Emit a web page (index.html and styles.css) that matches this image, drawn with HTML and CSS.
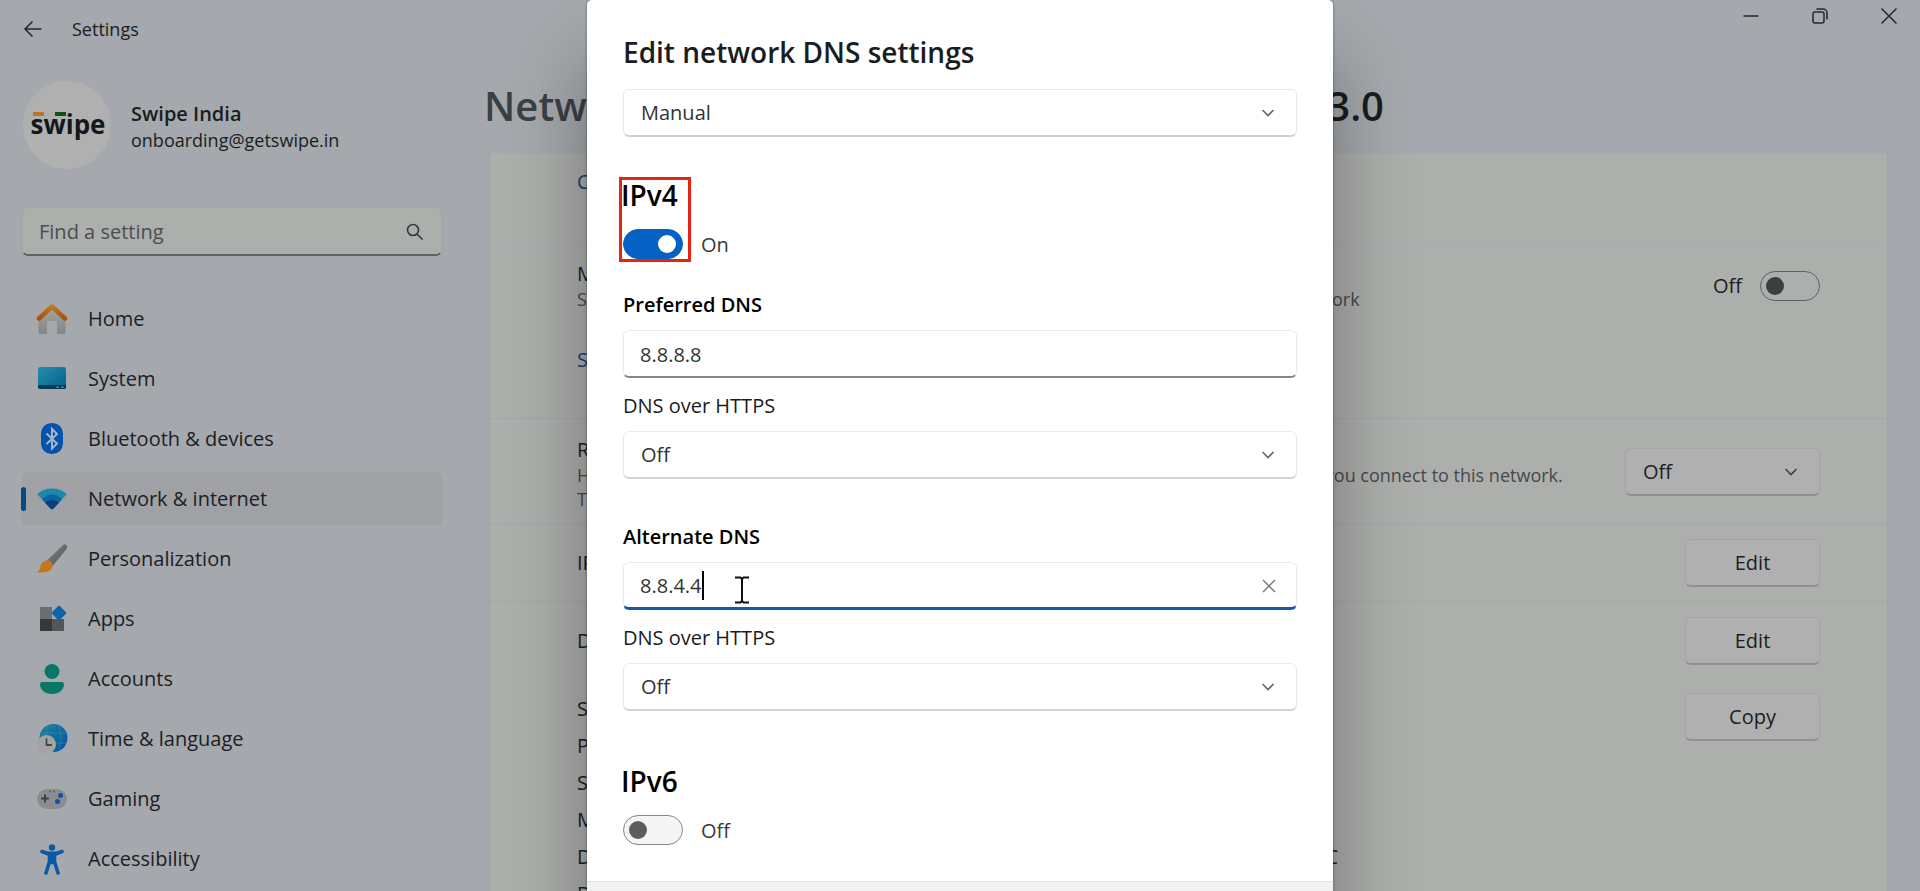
FILE: index.html
```html
<!DOCTYPE html>
<html lang="en">
  <head>
    <meta charset="utf-8" />
    <meta name="viewport" content="width=device-width, initial-scale=1" />
    <title>Settings</title>

    <link rel="stylesheet" href="styles.css">
  </head>
  <body>
    <div class="window">
      <header class="titlebar">
        <button class="back-button" aria-label="Back">
          <svg width="20" height="18" viewBox="0 0 20 18"><path d="M18.500 9H2M9.500 1.500L2 9l7.500 7.500" /></svg>
        </button>
        <span class="app-name">Settings</span>
        <div class="window-buttons">
          <button aria-label="Minimize">
            <svg width="18" height="18" viewBox="0 0 18 18"><path d="M1.500 9h15" /></svg>
          </button>
          <button aria-label="Restore">
            <svg width="18" height="18" viewBox="0 0 18 18"><rect x="2" y="5" width="11" height="11" rx="2" /><path d="M5.500 2H12a4 4 0 0 1 4 4v6.500" /></svg>
          </button>
          <button aria-label="Close">
            <svg width="18" height="18" viewBox="0 0 18 18"><path d="M1.500 1.500l15 15M16.500 1.500l-15 15" /></svg>
          </button>
        </div>
      </header>

      <!-- Left column -->
      <aside class="sidebar">
        <div class="account">
          <svg class="avatar" width="90" height="88" viewBox="0 0 90 88">
            <circle cx="45" cy="44" r="44" fill="#b0b0b0" />
            <text class="avatar-text" x="46" y="53" text-anchor="middle">swipe</text>
            <rect x="11" y="31" width="11" height="4" fill="#b87524" />
            <rect x="33" y="31" width="11" height="4" fill="#12511c" />
          </svg>
          <div class="account-info">
            <div class="account-name">Swipe India</div>
            <div class="account-mail">onboarding@getswipe.in</div>
          </div>
        </div>

        <div class="search">
          <input type="text" placeholder="Find a setting" aria-label="Find a setting" />
          <svg width="18" height="18" viewBox="0 0 18 18"><circle cx="7" cy="7" r="5.500" /><path d="M11 11l5.500 5.500" /></svg>
        </div>

        <nav class="menu">
          <a href="#">
            <svg class="icon" viewBox="0 0 32 32">
              <defs>
                <linearGradient id="wall" x1="0" y1="0" x2="0" y2="1"><stop offset="0" stop-color="#a6a6a6" /><stop offset="1" stop-color="#858585" /></linearGradient>
                <linearGradient id="roof" x1="0" y1="0" x2="0" y2="1"><stop offset="0" stop-color="#c07a1c" /><stop offset="1" stop-color="#a9520d" /></linearGradient>
              </defs>
              <path d="M2.500 15L16 3l13.500 12v15a1 1 0 0 1-1 1H22a1 1 0 0 1-1-1V19a1 1 0 0 0-1-1h-8a1 1 0 0 0-1 1v11a1 1 0 0 1-1 1H3.500a1 1 0 0 1-1-1z" fill="url(#wall)" />
              <path d="M3 15.500L16 3.500l13 12" fill="none" stroke="url(#roof)" stroke-width="4.500" stroke-linecap="round" stroke-linejoin="round" />
            </svg>
            Home
          </a>
          <a href="#">
            <svg class="icon" viewBox="0 0 32 32">
              <defs><linearGradient id="screen" x1="0" y1="0" x2="1" y2="1"><stop offset="0" stop-color="#2291ab" /><stop offset="1" stop-color="#055d8c" /></linearGradient></defs>
              <rect x="2" y="4" width="28" height="22" rx="2" fill="url(#screen)" />
              <path d="M2 22h28v2a2 2 0 0 1-2 2H4a2 2 0 0 1-2-2z" fill="#053b58" />
              <path d="M20.500 23.500h2v1.500h-2zM25.500 23.500h2v1.500h-2z" fill="#6c99ab" />
            </svg>
            System
          </a>
          <a href="#">
            <svg class="icon" viewBox="0 0 32 32">
              <rect x="5" y="0" width="22" height="31" rx="10.500" fill="#0552ac" />
              <path d="M10.500 10.500L21 20.500 16 25.500V6l5 5L10.500 21" fill="none" stroke="#a3b6cd" stroke-width="2" />
            </svg>
            Bluetooth &amp; devices
          </a>
          <a href="#" class="active">
            <svg class="icon" viewBox="0 0 32 32">
              <path d="M2 12Q1.300 11.300 2 10.500Q8 5.500 16 5.500T30 10.500Q30.700 11.300 30 12L17.500 25.500Q16 27 14.500 25.500z" fill="#1b87ac" />
              <path d="M6 16.300Q10.500 11.500 16 11.500T26 16.300L17.500 25.500Q16 27 14.500 25.500z" fill="#0d62a0" />
              <path d="M9 19.500Q12.500 17 16 17T23 19.500L17.500 25.500Q16 27 14.500 25.500z" fill="#0a3f79" />
            </svg>
            Network &amp; internet
          </a>
          <a href="#">
            <svg class="icon" viewBox="0 0 32 32">
              <defs><linearGradient id="handle" x1="0" y1="0" x2="1" y2="1"><stop offset="0" stop-color="#84878a" /><stop offset="1" stop-color="#4d5053" /></linearGradient></defs>
              <path d="M11.500 17L27 2q2-1.500 3.500 0t0 4L17 22.500z" fill="url(#handle)" />
              <path d="M11.500 17q4.500.5 5.500 5.500c-1.500 5.500-7 7.500-15 7q-1.500-.5 0-1.500c3-1.500 1.500-4 3.500-7.500q2-3 6-3.500z" fill="#c4761a" />
            </svg>
            Personalization
          </a>
          <a href="#">
            <svg class="icon" viewBox="0 0 32 32">
              <path d="M4 4h12v12H4z" fill="#6b6f72" />
              <path d="M4 16h12v12H5a1 1 0 0 1-1-1z" fill="#35393c" />
              <path d="M16 16h12v11a1 1 0 0 1-1 1H16z" fill="#53575a" />
              <rect x="17.500" y="4.500" width="11" height="11" rx="1.500" transform="rotate(45 23 10)" fill="#0c62ab" />
            </svg>
            Apps
          </a>
          <a href="#">
            <svg class="icon" viewBox="0 0 32 32">
              <circle cx="16" cy="8.500" r="7.500" fill="#087768" />
              <path d="M6 19h20a2 2 0 0 1 2 2c0 6-5 10-12 10S4 27 4 21a2 2 0 0 1 2-2z" fill="#087768" />
            </svg>
            Accounts
          </a>
          <a href="#">
            <svg class="icon" viewBox="0 0 32 32">
              <defs><linearGradient id="globe" x1="0" y1="0" x2="1" y2="1"><stop offset="0" stop-color="#1c87a0" /><stop offset="1" stop-color="#07519a" /></linearGradient></defs>
              <circle cx="17.500" cy="15" r="14" fill="url(#globe)" />
              <path d="M5 10h25M12 3q-3 8 0 22M23 3q4 10 0 24M5 20h25" fill="none" stroke="#3b93b3" stroke-opacity=".5" />
              <circle cx="10.500" cy="21.500" r="9.500" fill="#a3a5a5" />
              <path d="M10.500 15.500v6.500h5.500" fill="none" stroke="#44484b" stroke-width="1.800" />
            </svg>
            Time &amp; language
          </a>
          <a href="#">
            <svg class="icon" viewBox="0 0 32 32">
              <rect x="1" y="6" width="30" height="20" rx="10" fill="#898c90" />
              <path d="M5 15.500h8M9 11.500v8" stroke="#3d4144" stroke-width="2" />
              <path d="M13 8.500h2M17 8.500h2" stroke="#5d6164" stroke-width="1.500" />
              <circle cx="24.500" cy="12.500" r="2.500" fill="#0e559b" />
              <circle cx="21.500" cy="18.500" r="2.500" fill="#0e559b" />
            </svg>
            Gaming
          </a>
          <a href="#">
            <svg class="icon" viewBox="0 0 32 32">
              <circle cx="16" cy="4.500" r="3.200" fill="#0a59a5" />
              <path d="M6 8.500L12.500 11h7l6.500-2.500M13.500 11.500h5v8h-5zM13.500 18.500L10 30M18.500 18.500L22 30" fill="#0a59a5" stroke="#0a59a5" stroke-width="3.600" stroke-linecap="round" stroke-linejoin="round" />
            </svg>
            Accessibility
          </a>
        </nav>
      </aside>

      <!-- Page behind the dialog -->
      <main class="content">
        <h1 class="breadcrumb">
          <a href="#">Network &amp; internet</a>
          <span class="sep">›</span>
          <a href="#">Wi-Fi</a>
          <span class="sep">›</span>
          <span>Swipe 3.0</span>
        </h1>

        <div class="card">
          <section class="row row-link">
            <a href="#">Configure firewall and security settings</a>
          </section>

          <section class="row row-metered">
            <div class="row-line">
              <div>
                <label class="row-title" for="metered">Metered connection</label>
                <p class="row-text">Some apps may work differently to reduce data usage when you're connected to this network</p>
              </div>
              <div class="row-control">
                <span>Off</span>
                <input type="checkbox" class="switch" id="metered" />
              </div>
            </div>
            <a href="#">Set a data limit to help control data usage on this network</a>
          </section>

          <section class="row row-random">
            <div class="row-label">
              <label class="row-title" for="random">Random hardware addresses</label>
              <p class="row-text">Help protect your privacy by making it harder for sites to track your device location when you connect to this network.<br />The setting takes effect the next time you connect to this network.</p>
            </div>
            <div class="select select-small">
              <select id="random">
                <option>Off</option>
                <option>On</option>
              </select>
              <svg width="14" height="10" viewBox="0 0 14 10"><path d="M1.500 2L7 7.500 12.500 2" /></svg>
            </div>
          </section>

          <section class="row row-ip">
            <span>IP assignment:</span>
            <button class="button">Edit</button>
          </section>

          <section class="row-details">
            <div class="row-line">
              <span>DNS server assignment:</span>
              <button class="button">Edit</button>
            </div>
            <div class="details">
              <dl>
                <dt>SSID:</dt><dd>Swipe India 3.0</dd>
                <dt>Protocol:</dt><dd>Wi-Fi 5 (802.11ac)</dd>
                <dt>Security type:</dt><dd>WPA2-Personal</dd>
                <dt>Manufacturer:</dt><dd>Realtek</dd>
                <dt>Description:</dt><dd>Realtek 8822CE LAN PCI-E NIC</dd>
                <dt>Driver version:</dt><dd>2024.10</dd>
              </dl>
              <button class="button">Copy</button>
            </div>
          </section>
        </div>
      </main>

      <!-- Dialog -->
      <div class="dialog" role="dialog" aria-labelledby="dialog-title">
        <div class="dialog-body">
          <h2 class="dialog-title" id="dialog-title">Edit network DNS settings</h2>
          <div class="select">
            <select aria-label="Edit network DNS settings">
              <option>Manual</option>
              <option>Automatic (DHCP)</option>
            </select>
            <svg width="14" height="10" viewBox="0 0 14 10"><path d="M1.500 2L7 7.500 12.500 2" /></svg>
          </div>

          <div class="protocol marked">
            <h3>IPv4</h3>
            <div class="switch-line">
              <input type="checkbox" class="switch" id="ipv4" aria-label="IPv4" checked />
              <label for="ipv4">On</label>
            </div>
          </div>

          <div class="server">
            <label class="server-name" for="preferred">Preferred DNS</label>
            <div class="field">
              <input type="text" id="preferred" value="8.8.8.8" />
            </div>
            <label for="preferred-https">DNS over HTTPS</label>
            <div class="select">
              <select id="preferred-https">
                <option>Off</option>
                <option>On</option>
              </select>
              <svg width="14" height="10" viewBox="0 0 14 10"><path d="M1.500 2L7 7.500 12.500 2" /></svg>
            </div>
          </div>

          <div class="server">
            <label class="server-name" for="alternate">Alternate DNS</label>
            <div class="field focused">
              <input type="text" id="alternate" value="8.8.4.4" />
              <span class="caret"></span>
              <svg class="pointer" width="14" height="28" viewBox="0 0 14 28"><path d="M0 1.500h5.500L7 3l1.500-1.500H14M7 3v22M0 26.500h5.500L7 25l1.500 1.500H14" /></svg>
              <button class="clear-button" aria-label="Clear">
                <svg width="14" height="14" viewBox="0 0 14 14"><path d="M1 1l12 12M13 1L1 13" /></svg>
              </button>
            </div>
            <label for="alternate-https">DNS over HTTPS</label>
            <div class="select">
              <select id="alternate-https">
                <option>Off</option>
                <option>On</option>
              </select>
              <svg width="14" height="10" viewBox="0 0 14 10"><path d="M1.500 2L7 7.500 12.500 2" /></svg>
            </div>
          </div>

          <div class="protocol">
            <h3>IPv6</h3>
            <div class="switch-line">
              <input type="checkbox" class="switch" id="ipv6" aria-label="IPv6" />
              <label for="ipv6">Off</label>
            </div>
          </div>
        </div>
        <div class="dialog-footer"></div>
      </div>
    </div>
  </body>
</html>
```
FILE: styles.css
```css
*,
*::before {
  box-sizing: border-box;
}

html,
body {
  margin: 0;
  padding: 0;
  height: 100%;
}

body {
  font-family: "Open Sans", "Noto Sans", sans-serif;
  font-size: 20px;
  line-height: 24px;
  color: #1a1d20;
  background: #a5a9ad;
}

h1,
h2,
h3,
p,
dl,
dd {
  margin: 0;
}

button,
input,
select {
  margin: 0;
  font: inherit;
  color: inherit;
}

button {
  padding: 0;
  border: 0;
  background: none;
}

svg {
  display: block;
  flex: none;
}

.window {
  position: relative;
  display: grid;
  grid-template-columns: 466px 1fr;
  grid-template-rows: 57px 1fr;
  height: 100%;
  overflow: hidden;
}

/* Title bar */

.titlebar {
  grid-column: 1 / 3;
  display: flex;
  align-items: center;
  padding-left: 23px;
}

.titlebar svg {
  fill: none;
  stroke: #24282c;
  stroke-width: 1.5;
}

.app-name {
  margin-left: 29px;
  font-size: 18px;
}

.window-buttons {
  display: flex;
  gap: 6px;
  align-self: flex-start;
  margin-left: auto;
}

.window-buttons button {
  display: flex;
  justify-content: center;
  align-items: center;
  width: 63px;
  height: 32px;
}

/* Sidebar */

.sidebar {
  padding: 24px 24px 0 22px;
}

.account {
  display: flex;
  align-items: center;
  gap: 19px;
}

.account-info {
  padding-top: 4px;
  line-height: 26px;
}

.avatar-text {
  font-size: 26px;
  font-weight: 700;
  fill: #14171b;
}

.account-name {
  font-weight: 600;
}

.account-mail {
  font-size: 18px;
}

.search {
  position: relative;
  margin-top: 38px;
}

.search input {
  width: 100%;
  height: 49px;
  padding: 0 48px 0 16px;
  border: 1px solid #a3a6a6;
  border-bottom: 2px solid #5f6364;
  border-radius: 6px;
  background: #adafad;
}

.search input::placeholder {
  color: #4b4e4f;
}

.search svg {
  position: absolute;
  right: 18px;
  top: 16px;
  fill: none;
  stroke: #34383a;
  stroke-width: 1.6;
}

.menu {
  display: flex;
  flex-direction: column;
  gap: 6px;
  margin-top: 36px;
}

.menu a {
  position: relative;
  display: flex;
  align-items: center;
  gap: 20px;
  height: 54px;
  padding-left: 14px;
  border-radius: 6px;
  color: #1c2024;
  text-decoration: none;
}

.menu a.active {
  background: #9fa1a4;
}

.menu a.active::before {
  content: "";
  position: absolute;
  left: -1px;
  top: 15px;
  width: 5px;
  height: 24px;
  border-radius: 3px;
  background: #0a4688;
}

.icon {
  width: 32px;
  height: 32px;
}

/* Page */

.content {
  padding: 22px 32px 0 18px;
  min-width: 0;
}

.content a {
  color: #12427e;
  text-decoration: none;
}

.breadcrumb {
  display: flex;
  justify-content: space-between;
  width: 900px;
  height: 74px;
  font-size: 40px;
  line-height: 54px;
  font-weight: 600;
  white-space: nowrap;
}

.content .breadcrumb a,
.breadcrumb .sep {
  color: #3b4043;
}

.card {
  margin-left: 5px;
  min-height: 760px;
  border: 1px solid #a0a4a6;
  border-top-color: #a9acad;
  background: #adafad;
}

.row {
  padding: 0 67px 0 87px;
  border-bottom: 1px solid #a4a7a7;
}

.row-line {
  display: flex;
  justify-content: space-between;
  align-items: center;
}

.row-title {
  display: block;
  line-height: 26px;
}

.row-text {
  font-size: 18px;
  color: #47494a;
  white-space: nowrap;
}

.row-link {
  height: 89px;
  padding-top: 16px;
  border-bottom-color: #abadac;
}

.row-metered {
  height: 176px;
  padding-top: 18px;
}

.row-metered > a {
  display: block;
  margin-top: 37px;
}

.row-control {
  display: flex;
  align-items: center;
  gap: 18px;
}

.row-random {
  display: flex;
  justify-content: space-between;
  align-items: center;
  height: 106px;
}

.row-label {
  padding-top: 4px;
}

.row-ip {
  display: flex;
  justify-content: space-between;
  align-items: center;
  height: 77px;
}

.row-details {
  padding: 15px 67px 0 87px;
}

.details {
  display: flex;
  justify-content: space-between;
  align-items: flex-start;
  margin-top: 28px;
}

.details dl {
  display: grid;
  grid-template-columns: 1fr auto;
  row-gap: 13px;
  width: 761px;
  padding-top: 4px;
}

.button {
  width: 135px;
  height: 48px;
  border: 1px solid #a3a4a4;
  border-bottom: 2px solid #8f9191;
  border-radius: 6px;
  background: #b0b0b0;
}

/* Form controls */

.select,
.field {
  position: relative;
}

.select select,
.field input {
  display: block;
  width: 100%;
  height: 48px;
  padding: 1px 17px 0;
  border: 1px solid #ebebeb;
  border-bottom: 2px solid #d2d2d2;
  border-radius: 6px;
  background: #fff;
  color: #333;
  appearance: none;
  outline: none;
}

.field input {
  padding: 1px 16px 0;
  border-bottom-color: #868686;
}

.field.focused input {
  border-bottom: 3px solid #115aa5;
}

.select svg {
  position: absolute;
  right: 22px;
  top: 19px;
  fill: none;
  stroke: #666;
  stroke-width: 1.6;
  pointer-events: none;
}

.select-small {
  width: 195px;
}

.select-small select {
  border-color: #a3a4a4;
  border-bottom-color: #8f9191;
  background: #b0b0b0;
  color: #1c2024;
}

.select-small svg {
  stroke: #3d4042;
}

.switch {
  appearance: none;
  display: block;
  width: 60px;
  height: 30px;
  padding: 5px;
  border: 1px solid #868686;
  border-radius: 15px;
  background: #f5f5f5;
}

.switch::before {
  content: "";
  display: block;
  width: 18px;
  height: 18px;
  border-radius: 50%;
  background: #5d5d5d;
}

.switch:checked {
  border-color: #0561c4;
  background: #0561c4;
}

.switch:checked::before {
  margin-left: 29px;
  background: #fff;
}

.row-control .switch {
  border-color: #5e6061;
  background: none;
}

.row-control .switch::before {
  background: #3c3f3f;
}

/* Dialog */

.dialog {
  position: absolute;
  top: 0;
  left: 50%;
  transform: translateX(-50%);
  width: 746px;
  border-radius: 5px 5px 0 0;
  background: #fff;
  box-shadow: 0 60px 80px rgba(0, 0, 0, 0.35), 0 0 3px rgba(0, 0, 0, 0.4);
}

.dialog-body {
  padding: 34px 36px 36px;
}

.dialog-title {
  margin-bottom: 19px;
  font-size: 28px;
  line-height: 36px;
  font-weight: 600;
}

.protocol {
  margin-top: 51px;
}

.protocol h3 {
  margin-left: -2px;
  font-size: 28px;
  line-height: 36px;
  font-weight: 600;
  color: #000;
}

.protocol.marked {
  position: relative;
  margin-top: 40px;
}

.protocol.marked::before {
  content: "";
  position: absolute;
  left: -4px;
  top: 0;
  width: 72px;
  height: 85px;
  border: 3px solid #e8230f;
}

.switch-line {
  display: flex;
  align-items: center;
  gap: 18px;
  margin-top: 16px;
  color: #3a3a3a;
}

.switch-line label {
  padding-top: 2px;
}

.server {
  display: flex;
  flex-direction: column;
  margin-top: 46px;
}

.protocol + .server {
  margin-top: 34px;
}

.server > label {
  margin: 16px 0 13px;
}

.server > .server-name {
  margin: 0 0 13px;
  font-weight: 600;
  color: #000;
}

.server + .protocol {
  margin-top: 52px;
}

.caret {
  position: absolute;
  left: 79px;
  top: 9px;
  width: 2px;
  height: 29px;
  background: #000;
}

.pointer {
  position: absolute;
  left: 112px;
  top: 14px;
  fill: none;
  stroke: #111;
  stroke-width: 2;
}

.clear-button {
  position: absolute;
  right: 21px;
  top: 17px;
}

.clear-button svg {
  fill: none;
  stroke: #777;
  stroke-width: 1.4;
}

.dialog-footer {
  height: 96px;
  border-top: 1px solid #e3e3e3;
  background: #f2f2f2;
}
```
